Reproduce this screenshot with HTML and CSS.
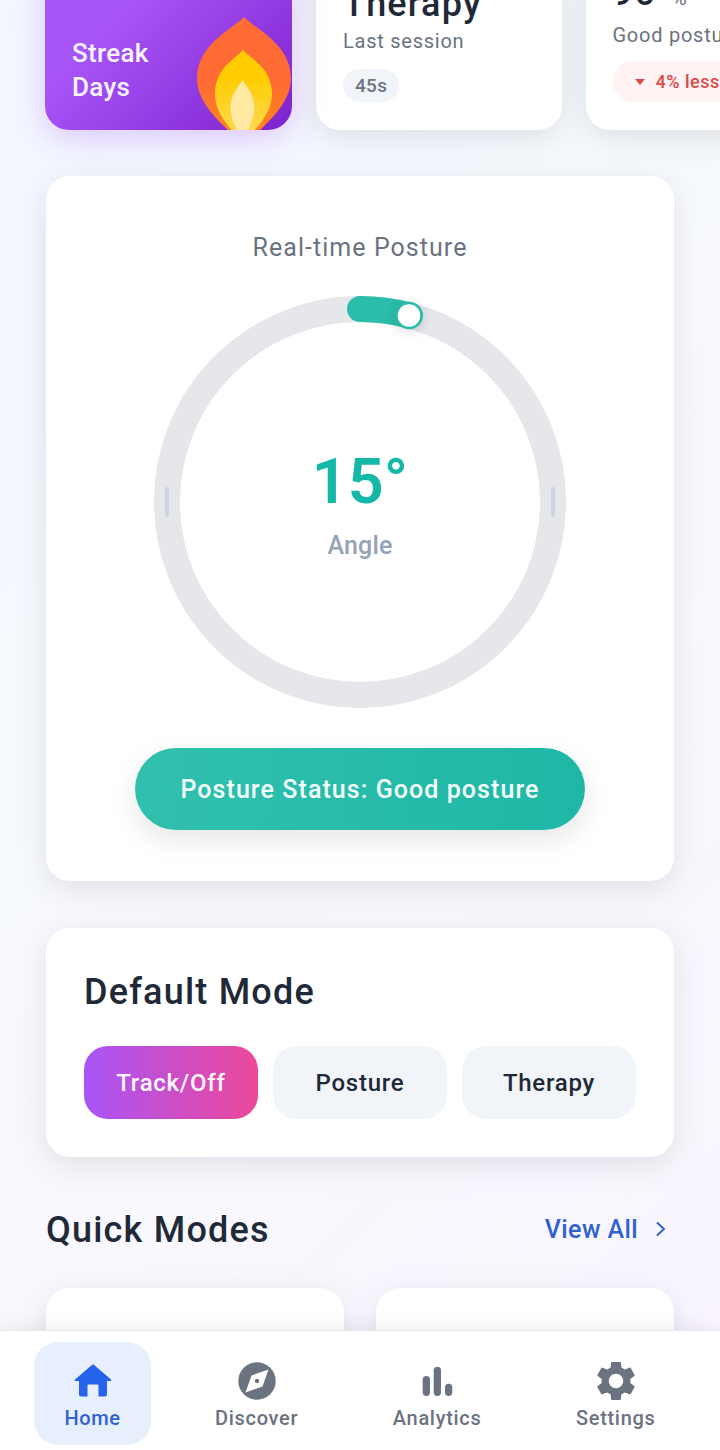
FILE: index.html
```html
<!DOCTYPE html>
<html lang="en">
<head>
    <meta charset="UTF-8">
    <meta name="viewport" content="width=device-width, initial-scale=1.0">
    <title>Posture Dashboard</title>
    <link rel="stylesheet" href="styles.css">
</head>
<body>
    <div class="screen">
        <main class="content">
            <div class="stats">
                <div class="stat-card streak">
                    <div class="streak-label">Streak<br>Days</div>
                    <svg class="flame" viewBox="0 0 100 116">
                        <defs>
                            <linearGradient id="flameOuter" x1="0" y1="0" x2="0" y2="1">
                                <stop offset="0.5" stop-color="#ff6b35"/>
                                <stop offset="1" stop-color="#ff8c10"/>
                            </linearGradient>
                            <linearGradient id="flameMid" x1="0" y1="0" x2="0" y2="1">
                                <stop offset="0.3" stop-color="#ffcc00"/>
                                <stop offset="1" stop-color="#ffdc60"/>
                            </linearGradient>
                        </defs>
                        <path fill="url(#flameOuter)" d="M50 3C60 14 97 30 97 64C97 88 76 108 50 130C24 108 3 88 3 64C3 30 40 14 50 3Z"/>
                        <path fill="url(#flameMid)" d="M49 36C58 46 78 54 78 80C78 100 62 115 49 128C36 115 21 100 21 80C21 54 40 46 49 36Z"/>
                        <path fill="#ffe9a3" d="M48.500 66C54 74 60.500 82 60.500 94C60.500 106 53 118 48.500 124C44 118 36.500 106 36.500 94C36.500 82 43 74 48.500 66Z"/>
                    </svg>
                </div>
                <div class="stat-card">
                    <div class="stat-value">Therapy</div>
                    <div class="stat-label">Last session</div>
                    <span class="pill">45s</span>
                </div>
                <div class="stat-card">
                    <div class="stat-value">96 <small>%</small></div>
                    <div class="stat-label">Good posture</div>
                    <span class="pill pill-down"><i class="arrow-down"></i>4% less</span>
                </div>
            </div>

            <section class="card posture">
                <h2 class="posture-title">Real-time Posture</h2>
                <div class="gauge">
                    <svg viewBox="0 0 412 412">
                        <circle class="gauge-track" cx="206" cy="206" r="193"/>
                        <path class="gauge-value" d="M206 13A193 193 0 0 1 255.900 19.600"/>
                        <rect class="gauge-tick" x="11" y="191" width="4" height="30" rx="2"/>
                        <rect class="gauge-tick" x="397" y="191" width="4" height="30" rx="2"/>
                        <circle class="gauge-knob" cx="255" cy="19.500" r="12.500"/>
                    </svg>
                    <div class="gauge-text">
                        <div class="angle">15°</div>
                        <div class="angle-label">Angle</div>
                    </div>
                </div>
                <div class="status">Posture Status: Good posture</div>
            </section>

            <section class="card mode">
                <h2 class="mode-title">Default Mode</h2>
                <div class="mode-buttons">
                    <button class="mode-btn active">Track/Off</button>
                    <button class="mode-btn">Posture</button>
                    <button class="mode-btn">Therapy</button>
                </div>
            </section>

            <div class="section-head">
                <h2>Quick Modes</h2>
                <a class="view-all">View All
                    <svg viewBox="0 0 12 18" width="12" height="18"><path d="M2.500 3L9 9L2.500 15" fill="none" stroke="currentColor" stroke-width="2" stroke-linecap="round" stroke-linejoin="round"/></svg>
                </a>
            </div>
            <div class="quick-grid">
                <div class="quick-card"></div>
                <div class="quick-card"></div>
            </div>
        </main>

        <nav class="tabbar">
            <a class="tab active">
                <svg viewBox="0 0 38 38"><path d="M18.200 2.700a1.200 1.200 0 0 1 1.600 0L37 17.400c.6.600.2 1.600-.6 1.600H33v13.500a2 2 0 0 1-2 2h-6.500V23.500a1 1 0 0 0-1-1h-9a1 1 0 0 0-1 1v11H7a2 2 0 0 1-2-2V19H1.600c-.8 0-1.200-1-.6-1.600Z"/></svg>
                <span>Home</span>
            </a>
            <a class="tab">
                <svg viewBox="0 0 38 38"><circle cx="19" cy="19" r="18.700"/><path class="needle" d="M30.500 7.500L24.500 24.500L7.500 30.500L13.500 13.500Z"/><circle cx="19" cy="19" r="2.200"/></svg>
                <span>Discover</span>
            </a>
            <a class="tab">
                <svg viewBox="0 0 38 38"><rect x="4.700" y="14" width="7.300" height="20" rx="3.650"/><rect x="15.700" y="4.700" width="7.300" height="29.300" rx="3.650"/><rect x="27" y="21.700" width="7.300" height="12.300" rx="3.650"/></svg>
                <span>Analytics</span>
            </a>
            <a class="tab">
                <svg viewBox="2.500 2.500 19 19"><path d="M19.140 12.940c.04-.3.06-.61.06-.94 0-.32-.02-.64-.07-.94l2.030-1.580c.18-.14.23-.41.12-.61l-1.920-3.320c-.12-.22-.37-.29-.59-.22l-2.390.96c-.5-.38-1.030-.7-1.620-.94l-.36-2.540c-.04-.24-.24-.41-.48-.41h-3.840c-.24 0-.43.17-.47.41l-.36 2.540c-.59.24-1.130.57-1.620.94l-2.390-.96c-.22-.08-.47 0-.59.22L2.740 8.870c-.12.21-.08.47.12.61l2.030 1.580c-.05.3-.09.63-.09.94s.02.64.07.94l-2.030 1.580c-.18.14-.23.41-.12.61l1.920 3.320c.12.22.37.29.59.22l2.390-.96c.5.38 1.030.7 1.620.94l.36 2.540c.05.24.24.41.48.41h3.840c.24 0 .44-.17.47-.41l.36-2.540c.59-.24 1.130-.56 1.620-.94l2.390.96c.22.08.47 0 .59-.22l1.920-3.320c.12-.22.07-.47-.12-.61l-2.010-1.580zM12 15.600c-1.980 0-3.600-1.620-3.600-3.600s1.620-3.600 3.600-3.600 3.600 1.620 3.600 3.600-1.620 3.600-3.600 3.600z"/></svg>
                <span>Settings</span>
            </a>
        </nav>
    </div>
</body>
</html>
```
FILE: styles.css
```css
* {
    box-sizing: border-box;
}
body {
    margin: 0;
    font-family: Roboto, "Liberation Sans", sans-serif;
    color: #1f2937;
}
h2 {
    margin: 0;
}
.screen {
    width: 720px;
    height: 1450px;
    display: flex;
    flex-direction: column;
    overflow: hidden;
    background: linear-gradient(135deg, #f2f7ff 0%, #f7f9fd 45%, #faf5ff 100%);
}
.content {
    flex: 1;
    min-height: 0;
    overflow: hidden;
    padding: 0 46px;
}

/* stats row, scrolled partly off the top and right */
.stats {
    display: flex;
    gap: 24px;
    height: 170px;
    margin: -40px -46px 0 -1px;
}
.stat-card {
    flex: 0 0 245.500px;
    height: 170px;
    padding: 0 27px 28px;
    display: flex;
    flex-direction: column;
    justify-content: flex-end;
    align-items: flex-start;
    background: #fff;
    border-radius: 24px;
    box-shadow: 0 8px 32px rgba(0, 0, 0, 0.1);
}
.streak {
    position: relative;
    flex-basis: 247px;
    overflow: hidden;
    padding-bottom: 26px;
    background: linear-gradient(135deg, #a855f7 30%, #7e22ce 100%);
    box-shadow: 0 8px 32px rgba(168, 85, 247, 0.3);
}
.streak-label {
    color: #fbf5ff;
    font-size: 26px;
    font-weight: 500;
    line-height: 34px;
    letter-spacing: 0.3px;
}
.flame {
    position: absolute;
    left: 149px;
    top: 54px;
    width: 100px;
    height: 116px;
}
.stat-value {
    font-size: 36px;
    font-weight: 550;
    line-height: 40px;
    letter-spacing: 1.200px;
    color: #1f2937;
    white-space: nowrap;
}
.stat-value small {
    margin-left: 6px;
    font-size: 20px;
    font-weight: 400;
    color: #6b7280;
}
.stat-label {
    margin-top: 3px;
    font-size: 20px;
    line-height: 28px;
    letter-spacing: 0.750px;
    color: #6b7280;
    white-space: nowrap;
}
.pill {
    margin-top: 14px;
    padding: 0 12px;
    height: 33px;
    display: inline-flex;
    align-items: center;
    border-radius: 17px;
    background: #f1f5f9;
    color: #6b7280;
    font-size: 19px;
    font-weight: 500;
    letter-spacing: 0.3px;
    white-space: nowrap;
}
.pill-down {
    height: 41px;
    margin-top: 12px;
    border-radius: 21px;
    padding: 0 22px;
    background: #fef2f2;
    color: #d94a4a;
    font-size: 18px;
    letter-spacing: 0.5px;
}
.arrow-down {
    width: 0;
    height: 0;
    margin-right: 11px;
    border-left: 5px solid transparent;
    border-right: 5px solid transparent;
    border-top: 6px solid #d94a4a;
}

.card {
    background: #fff;
    border-radius: 24px;
    box-shadow: 0 8px 32px rgba(0, 0, 0, 0.1);
}

/* posture gauge */
.posture {
    margin-top: 46px;
    height: 705px;
    padding-top: 58px;
    display: flex;
    flex-direction: column;
    align-items: center;
}
.posture-title {
    font-size: 25px;
    font-weight: 400;
    line-height: 28px;
    letter-spacing: 1.050px;
    color: #6b7280;
}
.gauge {
    position: relative;
    width: 412px;
    height: 412px;
    margin-top: 34px;
}
.gauge svg {
    display: block;
    overflow: visible;
}
.gauge-track {
    fill: none;
    stroke: #e5e7eb;
    stroke-width: 26;
}
.gauge-value {
    fill: none;
    stroke: #2bbdaa;
    stroke-width: 26;
    stroke-linecap: round;
}
.gauge-tick {
    fill: #cbd5e1;
}
.gauge-knob {
    fill: #fff;
    stroke: #2bbdaa;
    stroke-width: 2.500;
    filter: drop-shadow(0 2px 6px rgba(0, 0, 0, 0.15));
}
.gauge-text {
    position: absolute;
    inset: 0;
    display: flex;
    flex-direction: column;
    align-items: center;
    justify-content: center;
}
.angle {
    font-size: 63px;
    font-weight: 600;
    line-height: 76px;
    color: #14b8a6;
}
.angle-label {
    font-size: 25px;
    font-weight: 500;
    line-height: 30px;
    letter-spacing: 0.2px;
    margin-top: 11px;
    color: #94a3b8;
}
.status {
    margin-top: 40px;
    width: 450px;
    height: 82px;
    display: flex;
    align-items: center;
    justify-content: center;
    border-radius: 41px;
    background: linear-gradient(95deg, #32c0ae, #1eb7a5);
    box-shadow: 0 10px 28px rgba(0, 0, 0, 0.1);
    color: #f4fffd;
    font-size: 25px;
    font-weight: 500;
    letter-spacing: 1.070px;
}

/* default mode */
.mode {
    margin-top: 47px;
    padding: 38px;
}
.mode-title {
    font-size: 36px;
    font-weight: 550;
    line-height: 50px;
    letter-spacing: 1.200px;
    margin-top: 1px;
    margin-bottom: 29px;
}
.mode-buttons {
    display: grid;
    grid-template-columns: repeat(3, 1fr);
    gap: 15px;
}
.mode-btn {
    height: 73px;
    border: none;
    border-radius: 24px;
    background: #f1f5f9;
    color: #1f2937;
    font-family: inherit;
    font-size: 24px;
    font-weight: 500;
    letter-spacing: 0.750px;
}
.mode-btn.active {
    background: linear-gradient(90deg, #a855f7, #ec4899);
    color: #fdf6ff;
}

/* quick modes */
.section-head {
    margin-top: 48px;
    height: 48px;
    display: flex;
    align-items: center;
    justify-content: space-between;
}
.section-head h2 {
    font-size: 36px;
    font-weight: 550;
    letter-spacing: 1.200px;
    padding-top: 1px;
}
.view-all {
    display: flex;
    align-items: center;
    gap: 17px;
    padding-right: 7px;
    color: #2f62cc;
    font-size: 25px;
    font-weight: 500;
    letter-spacing: 0.4px;
}
.quick-grid {
    margin-top: 35px;
    display: grid;
    grid-template-columns: 1fr 1fr;
    gap: 32px;
}
.quick-card {
    height: 200px;
    background: #fff;
    border-radius: 24px;
    box-shadow: 0 8px 32px rgba(0, 0, 0, 0.1);
}

/* bottom nav */
.tabbar {
    flex: 0 0 120px;
    position: relative;
    display: flex;
    justify-content: space-evenly;
    align-items: flex-start;
    padding-top: 11px;
    background: #fff;
    border-top: 1px solid #e5e7eb;
    box-shadow: 0 -4px 18px rgba(0, 0, 0, 0.06);
}
.tab {
    height: 103px;
    padding: 20px 30px 0;
    display: flex;
    flex-direction: column;
    align-items: center;
    border-radius: 24px;
    color: #6b7280;
    font-size: 20px;
    font-weight: 500;
    letter-spacing: 0.700px;
}
.tab svg {
    width: 38px;
    height: 38px;
    display: block;
    fill: #6b7280;
}
.tab span {
    margin-top: 6px;
    line-height: 24px;
}
.tab .needle {
    fill: #fff;
}
.tab.active {
    background: #e8effc;
    color: #2f62cc;
    letter-spacing: 0.6px;
}
.tab.active svg {
    fill: #2563eb;
}
```
